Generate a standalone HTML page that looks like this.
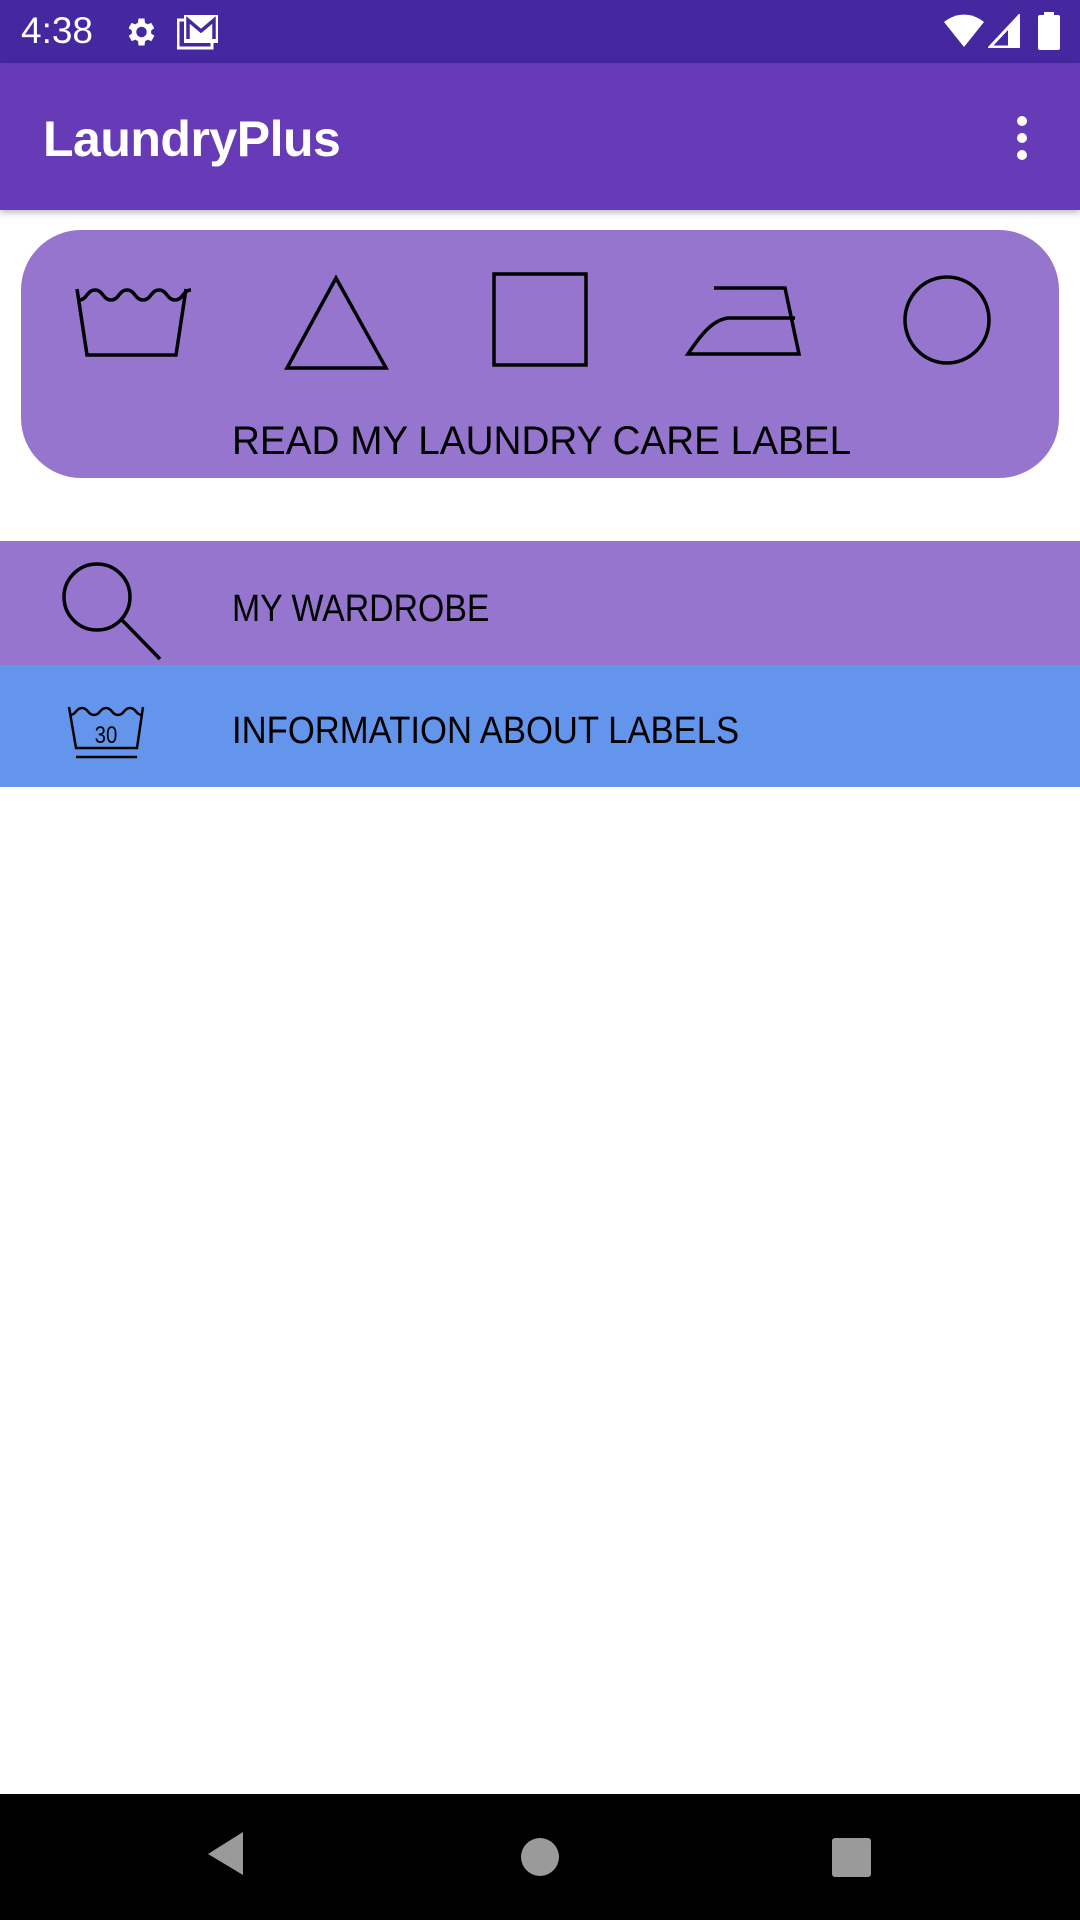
<!DOCTYPE html>
<html><head><meta charset="utf-8"><style>
*{margin:0;padding:0;box-sizing:border-box}
body{width:1080px;height:1920px;background:#fff;position:relative;overflow:hidden;font-family:"Liberation Sans",Roboto,sans-serif}
.sb{position:absolute;left:0;top:0;width:1080px;height:63px;background:#4527A0}
.ab{position:absolute;left:0;top:63px;width:1080px;height:147px;background:#673AB7;box-shadow:0 3px 6px rgba(0,0,0,.25)}
.t{position:absolute;color:#fff}
.card{position:absolute;left:21px;top:230px;width:1038px;height:248px;background:#9575CD;border-radius:60px}
.row{position:absolute;left:0;width:1080px}
.lbl{position:absolute;color:#000;font-size:38px;white-space:nowrap;transform-origin:left top}
.nav{position:absolute;left:0;top:1794px;width:1080px;height:126px;background:#000}
</style></head><body>
<div class="sb">
 <div class="t" style="left:21px;top:10px;font-size:37px">4:38</div>
 <svg style="position:absolute;left:122px;top:14px" width="36" height="36" viewBox="0 0 24 24"><path fill="#fff" d="M19.4 13a7.5 7.5 0 0 0 0-2l2.1-1.6-2-3.5-2.5 1a7.3 7.3 0 0 0-1.7-1L15 3h-4l-.4 2.9a7.3 7.3 0 0 0-1.7 1l-2.5-1-2 3.5L6.6 11a7.5 7.5 0 0 0 0 2l-2.1 1.6 2 3.5 2.5-1a7.3 7.3 0 0 0 1.7 1L11 21h4l.4-2.9a7.3 7.3 0 0 0 1.7-1l2.5 1 2-3.5zM13 15.5a3.5 3.5 0 1 1 0-7 3.5 3.5 0 0 1 0 7z"/></svg>
 <svg style="position:absolute;left:177px;top:14px" width="42" height="36" viewBox="0 0 42 36"><rect x="1" y="6" width="34" height="28" fill="none" stroke="#fff" stroke-width="3"/><rect x="7" y="1" width="34" height="28" fill="#fff"/><path d="M11 25V6l13 11L37 6v19" fill="none" stroke="#4527A0" stroke-width="3.5"/></svg>
 <svg style="position:absolute;left:944px;top:14px" width="40" height="34" viewBox="0 0 40 34"><path d="M20 33L0 8A31 31 0 0 1 40 8z" fill="#fff"/></svg>
 <svg style="position:absolute;left:988px;top:14px" width="32" height="34" viewBox="0 0 32 34"><path d="M2 33L31 2v31z" fill="none" stroke="#fff" stroke-width="3"/><path d="M20 33V14l11-11v30z" fill="#fff"/></svg>
 <svg style="position:absolute;left:1038px;top:12px" width="22" height="38" viewBox="0 0 22 38"><rect x="6" y="0" width="10" height="4" fill="#fff"/><rect x="0" y="3" width="22" height="35" rx="2" fill="#fff"/></svg>
</div>
<div class="ab">
 <div class="t" style="left:43px;top:47px;font-size:50px;font-weight:bold;letter-spacing:-0.5px">LaundryPlus</div>
 <svg style="position:absolute;left:1010px;top:52px" width="24" height="46" viewBox="0 0 24 46"><circle cx="12" cy="6" r="5" fill="#fff"/><circle cx="12" cy="23" r="5" fill="#fff"/><circle cx="12" cy="40" r="5" fill="#fff"/></svg>
</div>
<div class="card">
 <svg style="position:absolute;left:0;top:0" width="1038" height="248" viewBox="21 230 1038 248">
  <g fill="none" stroke="#000" stroke-width="3.5">
   <path d="M77 289L87 355H176L186 289"/>
   <path d="M79 300c8 0 8 -10 16 -10s8 10 16 10 8-10 16-10 8 10 16 10 8-10 16-10 8 10 16 10 8-10 16-10"/>
   <path d="M336 278L287 368H386Z"/>
   <rect x="494" y="274" width="92" height="91"/>
   <path d="M714 288H785L799 354H688C700 336 712 320 728 318H795"/>
   <ellipse cx="947" cy="320" rx="42" ry="43"/>
  </g>
 </svg>
 <div class="lbl" style="left:211px;top:189px;font-size:40px;transform:scaleX(0.967)">READ MY LAUNDRY CARE LABEL</div>
</div>
<div class="row" style="top:541px;height:124px;background:#9575CD">
 <svg style="position:absolute;left:0;top:0" width="200" height="124"><g fill="none" stroke="#000" stroke-width="3.5"><circle cx="97" cy="56" r="33"/><path d="M121 78L160 118"/></g></svg>
 <div class="lbl" style="left:232px;top:47px;transform:scaleX(0.89)">MY WARDROBE</div>
</div>
<div class="row" style="top:665px;height:122px;background:#6495ED">
 <svg style="position:absolute;left:0;top:0" width="200" height="122"><g fill="none" stroke="#000" stroke-width="2.5"><path d="M69 42L76 83H137L143 42"/><path d="M70 50c6 0 6-7 12-7s6 7 12 7 6-7 12-7 6 7 12 7 6-7 12-7 6 7 12 7"/><path d="M76 92H137"/></g><text x="106" y="78" font-size="24" text-anchor="middle" font-family="Liberation Sans" transform="translate(106 0) scale(0.85 1) translate(-106 0)">30</text></svg>
 <div class="lbl" style="left:232px;top:45px;transform:scaleX(0.912)">INFORMATION ABOUT LABELS</div>
</div>
<div class="nav">
 <svg width="1080" height="126"><g fill="#9a9a9a"><path d="M243 38L243 81L208 60Z"/><circle cx="540" cy="63" r="19"/><rect x="832" y="44" width="39" height="39" rx="3"/></g></svg>
</div>
</body></html>
